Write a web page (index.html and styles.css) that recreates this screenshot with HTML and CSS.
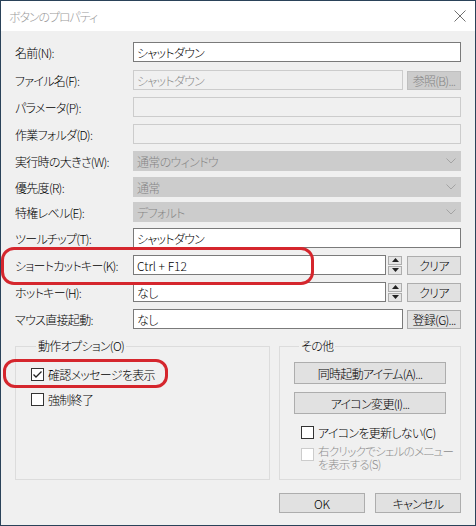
FILE: index.html
```html
<!DOCTYPE html>
<html lang="ja">
<head>
<meta charset="utf-8">
<title>ボタンのプロパティ</title>
<link rel="stylesheet" href="styles.css">
</head>
<body>
<div class="window">
  <div class="titlebar">
    <span class="title">ボタンのプロパティ</span>
    <svg class="close" width="12" height="12" viewBox="0 0 12 12"><path d="M0.5 0.5 L11.5 11.5 M11.5 0.5 L0.5 11.5" stroke="#6f6f6f" stroke-width="1" fill="none"/></svg>
  </div>
  <div class="content">
    <div class="form">
      <div class="row">
        <span class="label">名前(N):</span>
        <div class="input">シャットダウン</div>
      </div>
      <div class="row r-file">
        <span class="label">ファイル名(F):</span>
        <div class="input disabled">シャットダウン</div>
        <div class="btn btn-side btn-disabled">参照(B)...</div>
      </div>
      <div class="row">
        <span class="label">パラメータ(P):</span>
        <div class="input disabled"></div>
      </div>
      <div class="row">
        <span class="label">作業フォルダ(D):</span>
        <div class="input disabled"></div>
      </div>
      <div class="row">
        <span class="label">実行時の大きさ(W):</span>
        <div class="combo"><span>通常のウィンドウ</span><svg width="10" height="6" viewBox="0 0 10 6"><polyline points="0.5,0.5 5,5 9.5,0.5" fill="none" stroke="#a3a3a3" stroke-width="1"/></svg></div>
      </div>
      <div class="row r-tight1">
        <span class="label">優先度(R):</span>
        <div class="combo"><span>通常</span><svg width="10" height="6" viewBox="0 0 10 6"><polyline points="0.5,0.5 5,5 9.5,0.5" fill="none" stroke="#a3a3a3" stroke-width="1"/></svg></div>
      </div>
      <div class="row r-tight2">
        <span class="label">特権レベル(E):</span>
        <div class="combo"><span>デフォルト</span><svg width="10" height="6" viewBox="0 0 10 6"><polyline points="0.5,0.5 5,5 9.5,0.5" fill="none" stroke="#a3a3a3" stroke-width="1"/></svg></div>
      </div>
      <div class="row r-tight1">
        <span class="label">ツールチップ(T):</span>
        <div class="input">シャットダウン</div>
      </div>
      <div class="row">
        <span class="label">ショートカットキー(K):</span>
        <div class="input latin">Ctrl + F12</div>
        <div class="spin">
          <div class="spin-half"><svg width="7" height="4" viewBox="0 0 7 4"><polygon points="3.5,0 7,4 0,4" fill="#222"/></svg></div>
          <div class="spin-half"><svg width="7" height="4" viewBox="0 0 7 4"><polygon points="0,0 7,0 3.5,4" fill="#222"/></svg></div>
        </div>
        <div class="btn btn-side">クリア</div>
      </div>
      <div class="row">
        <span class="label">ホットキー(H):</span>
        <div class="input">なし</div>
        <div class="spin">
          <div class="spin-half"><svg width="7" height="4" viewBox="0 0 7 4"><polygon points="3.5,0 7,4 0,4" fill="#222"/></svg></div>
          <div class="spin-half"><svg width="7" height="4" viewBox="0 0 7 4"><polygon points="0,0 7,0 3.5,4" fill="#222"/></svg></div>
        </div>
        <div class="btn btn-side">クリア</div>
      </div>
      <div class="row r-file">
        <span class="label">マウス直接起動:</span>
        <div class="input">なし</div>
        <div class="btn btn-side">登録(G)...</div>
      </div>
    </div>

    <div class="groups">
      <fieldset class="group group-left">
        <legend>動作オプション(O)</legend>
        <label class="check">
          <span class="box"><svg width="11" height="11" viewBox="0 0 11 11"><polyline points="1.5,5.5 4,8 9.5,2.5" fill="none" stroke="#222" stroke-width="1.3"/></svg></span>
          <span>確認メッセージを表示</span>
        </label>
        <label class="check check-second">
          <span class="box"></span>
          <span>強制終了</span>
        </label>
      </fieldset>
      <fieldset class="group group-right">
        <legend>その他</legend>
        <div class="btn btn-wide">同時起動アイテム(A)...</div>
        <div class="btn btn-wide btn-second">アイコン変更(I)...</div>
        <label class="check check-icon">
          <span class="box"></span>
          <span>アイコンを更新しない(C)</span>
        </label>
        <label class="check check-shell">
          <span class="box box-disabled"></span>
          <span class="shell-text"><span class="line">右クリックでシェルのメニュー</span><span class="line">を表示する(S)</span></span>
        </label>
      </fieldset>
    </div>

    <div class="footer">
      <div class="btn btn-footer latin">OK</div>
      <div class="btn btn-footer">キャンセル</div>
    </div>
  </div>

  <div class="mark mark-shortcut"></div>
  <div class="mark mark-confirm"></div>
</div>
</body>
</html>
```

FILE: styles.css
```css
html, body {
  margin: 0;
  padding: 0;
  background: #1d3247;
}

.window {
  position: relative;
  width: 476px;
  height: 526px;
  box-sizing: border-box;
  border: 1px solid #2a4259;
  background: #f0f0f0;
  font-family: "Noto Sans CJK JP", "Noto Sans", sans-serif;
  font-size: 12px;
  font-weight: 300;
  letter-spacing: -0.7px;
  font-feature-settings: "palt" 1;
  color: #000;
  overflow: hidden;
}

.latin {
  letter-spacing: 0;
}

.titlebar {
  height: 30px;
  background: #fff;
  display: flex;
  align-items: center;
  justify-content: space-between;
  padding: 0 9px 0 8px;
}

.title {
  color: #9a9a9a;
  font-size: 12px;
  letter-spacing: -1.1px;
}

.close {
  display: block;
}

.content {
  padding: 11px 14px 0 12px;
}

.form {
  display: flex;
  flex-direction: column;
}

.row {
  display: flex;
  align-items: center;
  height: 20px;
  margin-top: 7px;
}

.row:first-child {
  margin-top: 0;
}

.row.r-file:nth-child(2) {
  margin-top: 8px;
}

.row.r-tight1 {
  margin-top: 6px;
}

.row.r-tight2 {
  margin-top: 5px;
}

.label {
  width: 120px;
  flex: none;
  white-space: nowrap;
  padding-left: 2px;
  box-sizing: border-box;
}

.input {
  flex: 1;
  height: 20px;
  box-sizing: border-box;
  border: 1px solid #7a7a7a;
  background: #fff;
  padding-left: 3px;
  display: flex;
  align-items: center;
  white-space: nowrap;
}

.input.disabled {
  background: #f0f0f0;
  border-color: #cccccc;
  color: #8a8a8a;
}

.combo {
  flex: 1;
  height: 20px;
  box-sizing: border-box;
  background: #cccccc;
  color: #858585;
  padding: 0 5px 0 4px;
  display: flex;
  align-items: center;
  justify-content: space-between;
}

.spin {
  flex: none;
  width: 14px;
  height: 19px;
  margin-left: 2px;
  display: flex;
  flex-direction: column;
  gap: 1px;
}

.spin-half {
  flex: 1;
  box-sizing: border-box;
  border: 1px solid #adadad;
  background: #e5e5e5;
  display: flex;
  align-items: center;
  justify-content: center;
}

.spin-half svg {
  display: block;
}

.btn {
  box-sizing: border-box;
  background: #e1e1e1;
  border: 1px solid #adadad;
  display: flex;
  align-items: center;
  justify-content: center;
  white-space: nowrap;
}

.btn-side {
  flex: none;
  width: 54px;
  height: 19px;
  margin-left: 5px;
}

.r-file .btn-side {
  margin-left: 4px;
}

.btn-disabled {
  background: #cccccc;
  border-color: #bfbfbf;
  color: #838383;
}

.groups {
  display: flex;
  gap: 9px;
  margin: 9px 0 0 2px;
}

.group {
  margin: 0;
  box-sizing: border-box;
  height: 142px;
  border: 1px solid #dcdcdc;
  padding: 0;
  min-width: 0;
}

.group legend {
  line-height: 16px;
  padding: 0 2px;
  margin-left: 5px;
}

.group-left {
  width: 255px;
  padding: 12px 0 0 15px;
}

.group-right {
  width: 182px;
  padding: 8px 0 0 14px;
}

.check {
  display: flex;
  align-items: center;
  height: 16px;
  gap: 4px;
}

.check-second {
  margin-top: 9px;
}

.box {
  flex: none;
  width: 13px;
  height: 13px;
  box-sizing: border-box;
  border: 1px solid #333;
  background: #fff;
  display: flex;
  align-items: center;
  justify-content: center;
}

.box svg {
  display: block;
}

.box-disabled {
  border-color: #cccccc;
}

.btn-wide {
  width: 152px;
  height: 22px;
}

.btn-second {
  margin-top: 8px;
}

.check-icon {
  margin-top: 10px;
  margin-left: 7px;
}

.check-shell {
  margin-top: 5px;
  margin-left: 7px;
  height: auto;
  align-items: flex-start;
}

.check-shell .box {
  margin-top: 3px;
}

.shell-text {
  display: flex;
  flex-direction: column;
  color: #8d8d8d;
  font-size: 11.5px;
  line-height: 13px;
  white-space: nowrap;
}

.shell-text .line {
  display: block;
  height: 13px;
  overflow: visible;
}

.footer {
  display: flex;
  justify-content: flex-end;
  gap: 10px;
  margin-top: 13px;
}

.btn-footer {
  width: 86px;
  height: 20px;
}

.mark {
  position: absolute;
  box-sizing: border-box;
  border: 3px solid #d5262d;
  border-radius: 13px;
}

.mark-shortcut {
  left: 0;
  top: 246px;
  width: 313px;
  height: 38px;
}

.mark-confirm {
  left: 2px;
  top: 358px;
  width: 165px;
  height: 29px;
  border-radius: 12px;
}
```
